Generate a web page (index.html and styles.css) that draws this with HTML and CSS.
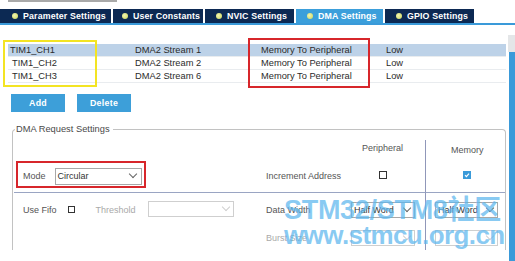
FILE: index.html
```html
<!DOCTYPE html>
<html>
<head>
<meta charset="utf-8">
<link rel="stylesheet" href="styles.css">
</head>
<body>
<div class="page">
  <div class="topstrip"></div>
  <nav class="tabs">
    <div class="tab first"><span class="dot"></span>Parameter Settings</div>
    <div class="tab w90"><span class="dot"></span>User Constants</div>
    <div class="tab w89"><span class="dot"></span>NVIC Settings</div>
    <div class="tab w87 active"><span class="dot"></span>DMA Settings</div>
    <div class="tab w89"><span class="dot"></span>GPIO Settings</div>
  </nav>
  <div class="main">
    <div class="content">
      <div class="table">
        <div class="row selected"><span class="c1">TIM1_CH1</span><span>DMA2 Stream 1</span><span>Memory To Peripheral</span><span>Low</span></div>
        <div class="row"><span class="c1 in">TIM1_CH2</span><span>DMA2 Stream 2</span><span>Memory To Peripheral</span><span>Low</span></div>
        <div class="row"><span class="c1 in">TIM1_CH3</span><span>DMA2 Stream 6</span><span>Memory To Peripheral</span><span>Low</span></div>
      </div>
      <div class="buttons">
        <button class="btn">Add</button>
        <button class="btn">Delete</button>
      </div>
      <fieldset class="group">
        <legend>DMA Request Settings</legend>
        <div class="grid">
          <div class="cell hdr-left"></div>
          <div class="cell"></div>
          <div class="cell hdr per">Peripheral</div>
          <div class="cell hdr mem">Memory</div>

          <div class="cell rowb left">
            <span class="lbl">Mode</span>
            <div class="select mode"><span>Circular</span><span class="chev"></span></div>
          </div>
          <div class="cell rowb lbl2">Increment Address</div>
          <div class="cell rowb per"><span class="cb cbper"></span></div>
          <div class="cell rowb mem"><span class="cb checked"><svg width="6" height="6" viewBox="0 0 6 6"><path d="M1 3.2 L2.4 4.6 L5 1.6" stroke="#fff" stroke-width="1.2" fill="none"/></svg></span></div>

          <div class="cell rowc left sep">
            <span class="lbl">Use Fifo</span>
            <span class="cb cbfifo"></span>
            <span class="lbl dis thr">Threshold</span>
            <div class="select thsel disabled"><span></span><span class="chev light"></span></div>
          </div>
          <div class="cell rowc lbl2 sep">Data Width</div>
          <div class="cell rowc sep per"><div class="select small"><span>Half Word</span><span class="chev"></span></div></div>
          <div class="cell rowc sep mem"><div class="select small"><span>Half Word</span><span class="chev"></span></div></div>

          <div class="cell rowd left"></div>
          <div class="cell rowd lbl2 dis">Burst Size</div>
          <div class="cell rowd per"><div class="select small disabled"><span></span><span class="chev light"></span></div></div>
          <div class="cell rowd mem"><div class="select small disabled"><span></span><span class="chev light"></span></div></div>
        </div>
      </fieldset>
    </div>
    <div class="scroll"><div class="scroll-top"></div><div class="scroll-bar"></div></div>
  </div>

  <div class="annot yellow"></div>
  <div class="annot red1"></div>
  <div class="annot red2"></div>

  <div class="watermark">
    <div class="wm1">STM32/STM8社区</div>
    <div class="wm2">www.stmcu.org.cn</div>
  </div>
</div>
</body>
</html>
```

FILE: styles.css
```css
* { box-sizing: border-box; }
html, body { margin: 0; padding: 0; background: #fff; }
body {
  font-family: "Liberation Sans", Arial, sans-serif;
  font-size: 9.3px;
  color: #2b2b2b;
}
.page {
  position: relative;
  width: 515px;
  height: 261px;
  overflow: hidden;
  display: flex;
  flex-direction: column;
}
.topstrip {
  margin-left: 8px;
  width: 109px;
  height: 2px;
  background: #a9a9a9;
}
.tabs {
  margin-top: 7px;
  display: flex;
  gap: 2px;
  height: 16px;
  border-bottom: 2px solid #3a9ad9;
}
.tab {
  height: 14px;
  background: #0c2953;
  color: #fff;
  font-weight: bold;
  font-size: 8.8px;
  letter-spacing: 0.15px;
  display: flex;
  align-items: center;
  gap: 5px;
  padding-left: 11px;
}
.tab.first { width: 111px; padding-left: 12px; }
.tab.w90 { width: 90px; padding-left: 9px; }
.tab.w89 { width: 89px; }
.tab.w87 { width: 87px; }
.tab.active { background: #3b9fdb; }
.dot {
  width: 6px;
  height: 6px;
  border-radius: 50%;
  background: radial-gradient(circle at 40% 40%, #f2f4b0, #c9d658);
  flex: none;
}
.main {
  flex: 1;
  display: flex;
}
.content {
  flex: 1;
  padding-top: 19px;
  padding-left: 8px;
}
.scroll {
  width: 7px;
  margin-top: 10px;
  display: flex;
  flex-direction: column;
}
.scroll-top { height: 17px; background: #e4e6e8; }
.scroll-bar { flex: 1; background: #3a9ad9; margin-left: 1px; }

.table { width: 498px; }
.row {
  display: grid;
  grid-template-columns: 125px 126px 125px 1fr;
  height: 13px;
  align-items: center;
  padding-left: 2px;
  border-bottom: 1px solid #e9ecef;
  line-height: 12px;
}
.row.selected { background: #bdd2e8; }
.c1.in { padding-left: 2px; }

.buttons {
  margin-top: 11px;
  margin-left: 3px;
  display: flex;
  gap: 12px;
}
.btn {
  width: 54px;
  height: 18px;
  border: none;
  background: #3d9fd9;
  color: #fff;
  font-family: "Liberation Sans", Arial, sans-serif;
  font-weight: bold;
  font-size: 8.8px;
  letter-spacing: 0.3px;
  padding: 0;
}

.group {
  margin: 12px 0 0 4px;
  width: 494px;
  height: 126px;
  padding: 0;
  border: 1px solid #c2c2c2;
  border-bottom: none;
  border-radius: 4px 4px 0 0;
  color: #555;
  font-size: 9px;
}
.group legend {
  margin-left: 2px;
  padding: 0 3px 0 1px;
  font-size: 9.3px;
  line-height: 11px;
  color: #4a4a4a;
}
.grid {
  display: grid;
  grid-template-columns: 253px 85px 74px 1fr;
  grid-template-rows: 25px 32px 34px 24px;
}
.cell { display: flex; align-items: center; }
.hdr.per { padding-left: 11px; }
.hdr.mem { padding-left: 25px; margin-top: 5px; }
.mem { border-left: 1px solid #9097b9; }
.left { padding-left: 10px; }
.lbl { color: #555; }
.dis { color: #a9a9a9; }
.sep { border-top: 1px solid #9aa5c3; }
.left.sep { margin-left: 1px; padding-left: 9px; }
.mem.sep { border-top: 1px solid #9aa5c3; }

.select {
  height: 17px;
  border: 1px solid #a8a8a8;
  background: #fff;
  display: flex;
  align-items: center;
  justify-content: space-between;
  padding: 0 4px 0 2px;
  color: #333;
}
.select.mode { width: 87px; margin-left: 9px; padding-right: 5px; }
.select.thsel { width: 86px; margin-left: 12px; height: 16px; margin-top: -1px; }
.select.small { width: 64px; height: 16px; }
.mem .select.small { margin-left: 9px; width: 63px; }
.select.disabled { border-color: #cfcfcf; }
.chev {
  width: 6px;
  height: 6px;
  border-right: 1.2px solid #666;
  border-bottom: 1.2px solid #666;
  transform: rotate(45deg);
  margin-top: -4px;
}
.chev.light { border-color: #cfcfcf; }

.cb {
  width: 8px;
  height: 8px;
  border: 1px solid #333;
  display: inline-flex;
  align-items: center;
  justify-content: center;
  background: #fff;
}
.cbper { margin-left: 28px; margin-top: -2px; }
.mem .cb { margin-left: 37px; margin-top: -2px; }
.cb.checked { background: #3a9ad9; border-color: #3a9ad9; }
.cbfifo { margin-left: 11px; width: 7px; height: 7px; }
.thr { margin-left: 21px; }

.annot { position: absolute; pointer-events: none; }
.yellow { left: 3px; top: 40px; width: 94px; height: 47px; border: 2px solid #f3e423; }
.red1 { left: 248px; top: 38px; width: 122px; height: 50px; border: 2px solid #d7262b; }
.red2 { left: 16px; top: 161px; width: 130px; height: 27px; border: 2px solid #d7262b; }

.watermark {
  position: absolute;
  left: 284px;
  top: 197px;
  color: rgba(92, 182, 238, 0.72);
  font-family: "Liberation Sans", Arial, "Noto Sans CJK SC", sans-serif;
  font-weight: bold;
  pointer-events: none;
}
.wm1 { font-size: 27px; line-height: 26px; letter-spacing: -0.3px; }
.wm2 { font-size: 26px; line-height: 24px; letter-spacing: -0.6px; }
```
